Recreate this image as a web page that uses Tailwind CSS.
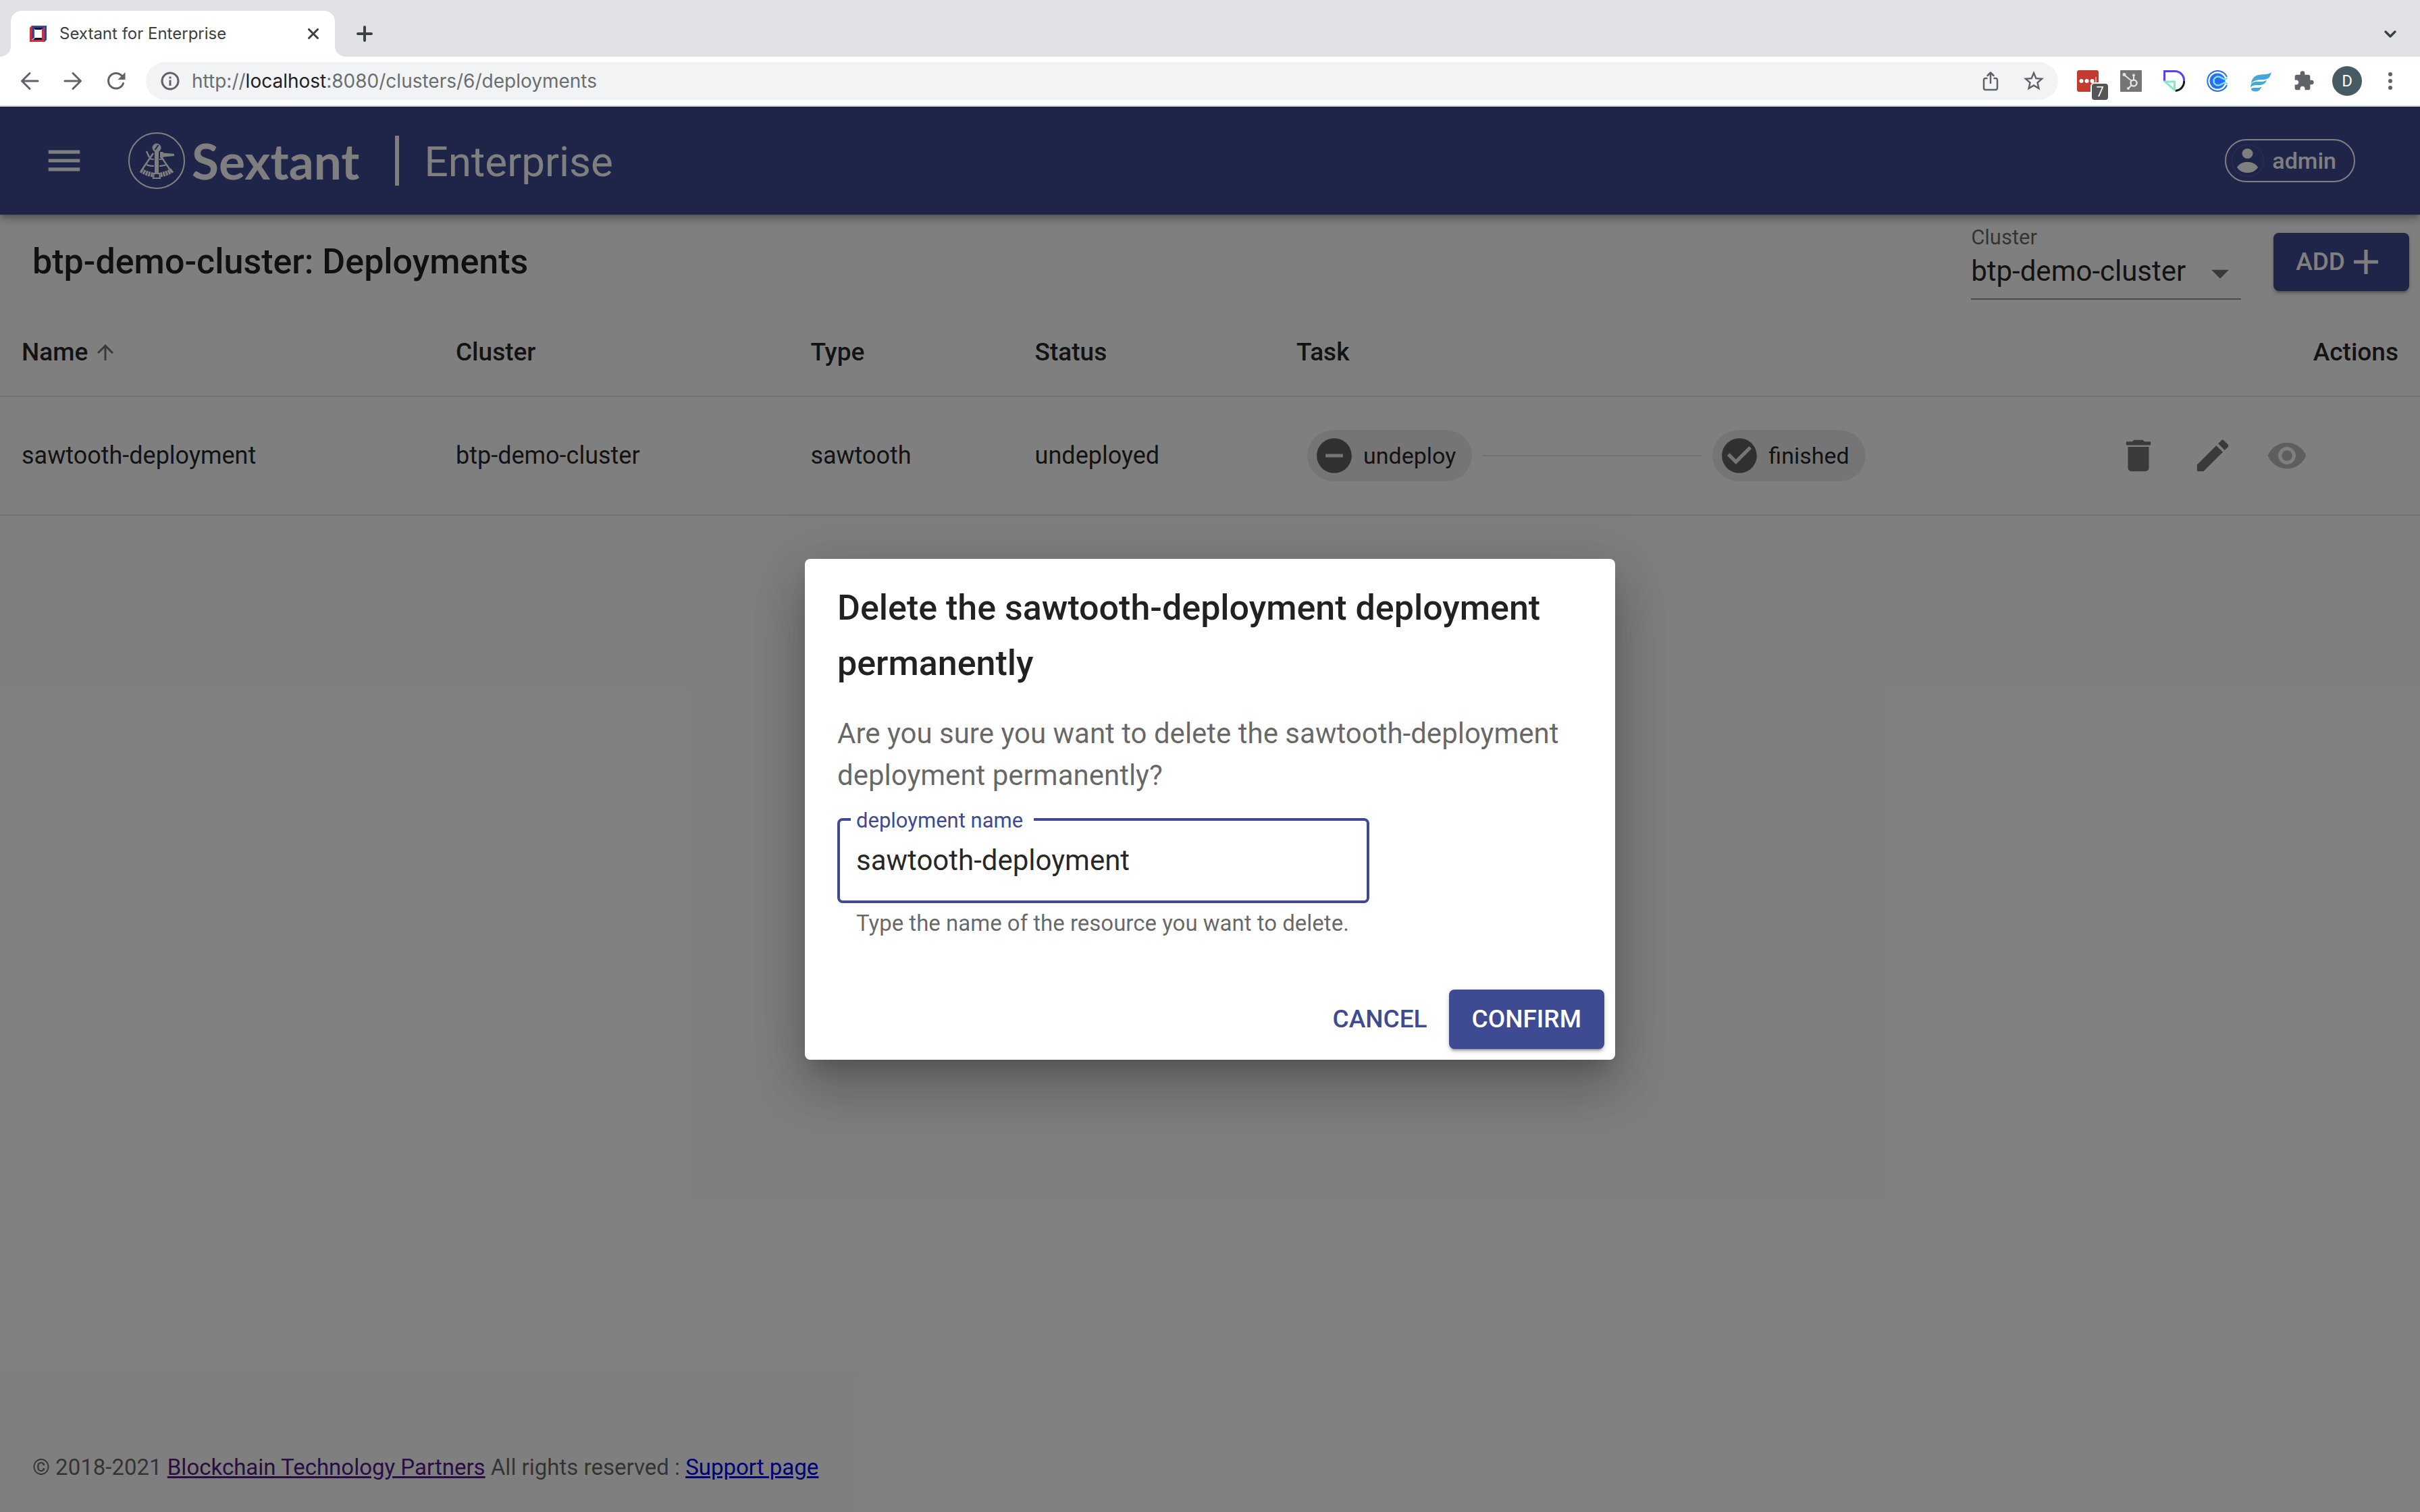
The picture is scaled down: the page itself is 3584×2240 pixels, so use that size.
<!DOCTYPE html>
<html lang="en">
<head>
<meta charset="utf-8">
<title>Sextant for Enterprise</title>
<script src="https://cdn.jsdelivr.net/npm/@tailwindcss/browser@4"></script>
</head>
<body class="flex min-h-screen flex-col bg-white font-['Roboto',sans-serif] text-black/87">

<!-- Browser window -->
<div class="font-['Inter',sans-serif]">
  <div class="flex h-[84px] items-end justify-between bg-[#dfe1e5]">
    <div class="flex items-end">
      <svg class="size-4" viewBox="0 0 16 16" aria-hidden="true"><path d="M16 0v16H0A16 16 0 0 0 16 0z" fill="#fff"/></svg>
      <div class="flex h-[68px] w-[480px] items-center rounded-t-2xl bg-white pr-6 pl-7">
        <svg class="h-[26px] w-[25px]" viewBox="0 0 25 26" aria-hidden="true">
          <path d="M3 1h22v21l-3 3V4H3z" fill="#36418f"/><path d="M0 4l3-3v21h19v3H0z" fill="#cf2f3f"/>
          <path d="M3 1h22l-4 4H7v14l-4 3z" fill="#3c4796"/><path d="M22 5v17H5l3-3h10V5z" fill="#cf2f3f"/>
          <path d="M6 4h14l-3 3H8z" fill="#10142e"/><path d="M5 22l3-3h9l2 3z" fill="#10142e"/><path d="M7 7h11v12H7z" fill="#fff"/>
        </svg>
        <span class="flex-1 pl-[19px] text-[24px] leading-8 text-[#3c4043]">Sextant for Enterprise</span>
        <button aria-label="Close tab"><svg class="block size-4" viewBox="0 0 16 16" fill="none" stroke="#3c4043" stroke-width="3" stroke-linecap="round"><path d="M1.500 1.500l13 13M14.500 1.500l-13 13"/></svg></button>
      </div>
      <svg class="size-4" viewBox="0 0 16 16" aria-hidden="true"><path d="M0 0v16h16A16 16 0 0 1 0 0z" fill="#fff"/></svg>
      <button aria-label="New tab" class="mb-[22px] ml-4"><svg class="block size-6" viewBox="0 0 24 24" fill="none" stroke="#3c4043" stroke-width="4" stroke-linecap="round"><path d="M12 2v20M2 12h20"/></svg></button>
    </div>
    <button aria-label="Search tabs" class="mr-[34px] mb-[26px]"><svg class="block h-4 w-5" viewBox="0 0 20 16" fill="none" stroke="#3c4043" stroke-width="3.500" stroke-linecap="round" stroke-linejoin="round"><path d="M3 5l7 7 7-7"/></svg></button>
  </div>
  <div class="flex h-[74px] items-center gap-3 border-b-2 border-[#dadce0] bg-white px-3 text-[#5f6368]">
    <div class="flex">
      <button aria-label="Back" class="flex w-16 justify-center"><svg class="size-8" viewBox="0 0 32 32" fill="none" stroke="currentColor" stroke-width="3" stroke-linecap="round" stroke-linejoin="round"><path d="M28 16H5M16 4.500L4.500 16 16 27.500"/></svg></button>
      <button aria-label="Forward" class="flex w-16 justify-center"><svg class="size-8" viewBox="0 0 32 32" fill="none" stroke="currentColor" stroke-width="3" stroke-linecap="round" stroke-linejoin="round"><path d="M4 16h23M16 4.500L27.500 16 16 27.500"/></svg></button>
      <button aria-label="Reload" class="flex w-16 justify-center"><svg class="size-8" viewBox="0 0 32 32" fill="none" stroke="currentColor" stroke-width="3" stroke-linecap="round"><path d="M26.500 19.500A11.300 11.300 0 1 1 24.500 8.500"/><path d="M29.500 3v11h-11z" fill="currentColor" stroke="none"/></svg></button>
    </div>
    <div class="flex h-14 flex-1 items-center rounded-full bg-[#f1f3f4] pr-1 pl-5">
      <svg class="size-8" viewBox="0 0 32 32" aria-hidden="true"><circle cx="16" cy="16" r="12" fill="none" stroke="currentColor" stroke-width="3"/><path d="M14.500 14.500h3V23h-3zM14.500 9.500h3v3h-3z" fill="currentColor"/></svg>
      <a href="http://localhost:8080/clusters/6/deployments" class="flex-1 pl-4 text-[28px] leading-9 text-[#6b6e71]">http://<span class="text-[#202124]">localhost</span>:8080/clusters/6/deployments</a>
      <button aria-label="Share" class="flex w-16 justify-center"><svg class="size-8" viewBox="0 0 32 32" fill="none" stroke="currentColor" stroke-width="2.500" stroke-linecap="round" stroke-linejoin="round"><path d="M10.500 12H8.500a2.500 2.500 0 0 0-2.500 2.500v12A2.500 2.500 0 0 0 8.500 29h15a2.500 2.500 0 0 0 2.500-2.500v-12a2.500 2.500 0 0 0-2.500-2.500h-2M16 19V4M11.500 8L16 3.500 20.500 8"/></svg></button>
      <button aria-label="Bookmark this page" class="flex w-16 justify-center"><svg class="size-9" viewBox="0 0 24 24" fill="currentColor"><path d="M22 9.240l-7.190-.62L12 2 9.190 8.630 2 9.240l5.460 4.730L5.820 21 12 17.270 18.180 21l-1.630-7.030L22 9.240zM12 15.400l-3.760 2.270 1-4.280-3.320-2.880 4.380-.38L12 6.100l1.710 4.040 4.380.38-3.320 2.880 1 4.280L12 15.400z"/></svg></button>
    </div>
    <div class="flex items-center">
      <button aria-label="Password manager" class="relative flex w-16 justify-center">
        <svg class="size-8" viewBox="0 0 32 32"><rect width="32" height="32" rx="3" fill="#c23b31"/><g fill="#fff"><circle cx="6.500" cy="16" r="3"/><circle cx="14.500" cy="16" r="3"/><circle cx="22.500" cy="16" r="3"/><path d="M27.500 10h1v12h-1z"/></g></svg>
        <span class="absolute right-0 top-[18px] flex size-[28px] items-center justify-center rounded-md border-2 border-white bg-[#555] font-['Roboto',sans-serif] text-[20px] leading-none text-white">7</span>
      </button>
      <button aria-label="HubSpot" class="flex w-16 justify-center"><svg class="size-8" viewBox="0 0 32 32"><rect width="32" height="32" rx="1" fill="#757575"/><g fill="none" stroke="#e4e4e4"><circle cx="20" cy="19" r="4.500" stroke-width="2.500"/><path d="M16.500 15.500L6 7M20 14V8M16.500 22.500L12 27" stroke-width="2"/></g><g fill="#e4e4e4"><circle cx="6" cy="6.500" r="2.500"/><circle cx="20" cy="7.500" r="2"/><circle cx="12" cy="27" r="2"/></g></svg></button>
      <button aria-label="Notes extension" class="flex w-16 justify-center"><svg class="size-8" viewBox="0 0 32 32" fill="none" stroke-width="3"><path d="M1.500 16V1.500H17A13.500 13.500 0 0 1 30.500 15.500" stroke="#5f3df5"/><path d="M30.500 15.500A13.500 13.500 0 0 1 17.500 30.500" stroke="#1b1b1b"/><path d="M2.500 17h14v12.500z" stroke="#82eacb"/></svg></button>
      <button aria-label="Calendar extension" class="flex w-16 justify-center"><svg class="size-8" viewBox="0 0 32 32" fill="none"><path d="M30 22A15 15 0 1 1 30 10" stroke="#276ef1" stroke-width="2"/><circle cx="16" cy="16" r="11.500" fill="#276ef1"/><path d="M32 12.500h-4v7h4z" fill="#fff"/><path d="M30.500 11.500c-3 3-5 2-8 0-6-4-12-1-12 4.500s6 8.500 12 4.500c3-2 5-3 8 0" stroke="#7be3f0" stroke-width="2.500"/></svg></button>
      <button aria-label="Feather extension" class="flex w-16 justify-center"><svg class="size-8" viewBox="0 0 32 32" fill="#45a6d9"><path d="M31.500 3C31 10 27 14 20 14c-8 0-15 1-18 6C3 10 9 7 17 6.500 24 6 29 6 31.500 3z"/><path d="M25 14.500C23 20 20 22 14 22c-6-.5-11 .5-13 3.500C1 19 5 17 11 17c6 .3 11 0 14-2.500z"/><path d="M17.500 24.500C15 30 12 32 7 31.500c-4-.5-6-3-4.500-4.500 3-2.500 10 .5 15-2.500z"/></svg></button>
      <button aria-label="Extensions" class="flex w-16 justify-center"><svg class="size-8" viewBox="0 0 24 24" fill="currentColor"><path d="M20.500 11H19V7c0-1.100-.9-2-2-2h-4V3.500a2.500 2.500 0 0 0-5 0V5H4c-1.100 0-1.990.9-1.990 2v3.800H3.500c1.490 0 2.700 1.210 2.700 2.700s-1.210 2.700-2.700 2.700H2V20c0 1.100.9 2 2 2h3.800v-1.500c0-1.490 1.210-2.700 2.700-2.700s2.700 1.210 2.700 2.700V22H17c1.100 0 2-.9 2-2v-4h1.500a2.500 2.500 0 0 0 0-5z"/></svg></button>
      <button aria-label="Profile" class="flex w-16 justify-center"><span class="flex size-11 items-center justify-center rounded-full bg-[#485a64] font-['Roboto',sans-serif] text-[24px] leading-none text-white">D</span></button>
      <button aria-label="Menu" class="flex w-16 justify-center"><svg class="size-8" viewBox="0 0 32 32" fill="currentColor"><circle cx="16" cy="6" r="3"/><circle cx="16" cy="16" r="3"/><circle cx="16" cy="26" r="3"/></svg></button>
    </div>
  </div>
</div>

<!-- Application -->
<div class="relative flex flex-1 flex-col overflow-hidden">
  <header class="flex h-40 items-center bg-[#3e4a92] px-16 text-white shadow-[0_4px_8px_-2px_rgba(0,0,0,0.2),0_8px_10px_0_rgba(0,0,0,0.14),0_2px_20px_0_rgba(0,0,0,0.12)]">
    <button aria-label="Open menu"><svg class="block size-[62px]" viewBox="0 0 24 24" fill="currentColor"><path d="M3 18h18v-2H3v2zm0-5h18v-2H3v2zm0-7v2h18V6H3z"/></svg></button>
    <svg class="ml-16 size-[84px]" viewBox="0 0 84 84" fill="none" stroke="#fff" aria-hidden="true">
      <circle cx="42" cy="42" r="41" stroke-width="2"/>
      <path d="M27 28l4 9M37 31L18.500 58M48 35l16 24" stroke-width="2.500"/>
      <path d="M32 39c2 1 4 1 6 1M46 40c2 0 4 0 6-1M27 48c4 2 7 2 11 2M46 50c4 0 7-1 11-2" stroke-width="2"/>
      <path d="M19 56c5 4 11 6 18 7M65 56c-5 4-11 6-18 7" stroke-width="7" stroke-dasharray="3 1"/>
      <path d="M39 26h6v38h-6z" fill="#fff" stroke="none"/><circle cx="42" cy="23" r="6.500" fill="#fff" stroke="none"/>
      <path d="M39.500 26l5-7" stroke="#3e4a92" stroke-width="2"/>
      <path d="M47 29h4l1 1.500 16 1.500v3l-16 1.500-1 1.500h-4z" fill="#fff" stroke="none"/>
      <path d="M38 61h8l1 7H37z" stroke-width="2" fill="#3e4a92"/>
    </svg>
    <span class="pl-[10px] font-['Lato',sans-serif] text-[73px] leading-[88px] font-bold">Sextant</span>
    <span class="ml-[52px] h-[74px] w-[6px] bg-white"></span>
    <span class="ml-[38px] pt-[3px] text-[62px] leading-[72px]">Enterprise</span>
    <button class="mr-8 ml-auto flex h-16 items-center rounded-full border-2 border-white pr-[26px] pl-2 text-[34px] leading-10 font-medium">
      <svg class="mr-3 size-12" viewBox="0 0 48 48" aria-hidden="true"><circle cx="24" cy="24" r="23.500" fill="none" stroke="#5e68a4"/><ellipse cx="23.500" cy="13.500" rx="8" ry="7.500" fill="#fff"/><path d="M8 34c3-5.500 9-8 15.500-8S36 28.500 39 34c-3 5-9 8-15.500 8S11 39 8 34z" fill="#fff"/></svg>
      admin
    </button>
  </header>

  <main>
    <div class="flex h-[140px] items-center pr-4 pl-12">
      <h1 class="flex-1 text-[52px] leading-[82px] font-medium">btp-demo-cluster: Deployments</h1>
      <div class="relative mr-12 flex w-[400px] flex-col gap-1">
        <label for="cluster" class="text-[31px] leading-10 text-black/60">Cluster</label>
        <select id="cluster" class="h-[68px] w-full appearance-none border-b-2 border-black/42 pb-[14px] text-[42px] leading-[48px]"><option>btp-demo-cluster</option></select>
        <svg class="pointer-events-none absolute right-0 bottom-2 size-[62px] text-black/54" viewBox="0 0 24 24" fill="currentColor" aria-hidden="true"><path d="M7 10l5 5 5-5z"/></svg>
      </div>
      <button class="flex h-[86px] items-center rounded-lg bg-[#3e4a92] px-[33px] text-[37px] leading-[62px] font-medium text-white shadow-[0_6px_2px_-4px_rgba(0,0,0,0.2),0_4px_4px_0_rgba(0,0,0,0.14),0_2px_10px_0_rgba(0,0,0,0.12)]">ADD<svg class="size-[62px]" viewBox="0 0 24 24" fill="currentColor" aria-hidden="true"><path d="M19 13h-6v6h-2v-6H5v-2h6V5h2v6h6v2z"/></svg></button>
    </div>

    <table class="w-full table-fixed border-collapse text-left">
      <thead>
        <tr class="h-[129px] border-b-2 border-[#e0e0e0] text-[37px] leading-[54px]">
          <th class="w-[17.94%] px-8 font-medium"><span class="flex items-center gap-2">Name<svg class="size-9 text-black/54" viewBox="0 0 24 24" fill="currentColor" aria-label="sorted ascending"><path d="M4 12l1.410 1.410L11 7.830V20h2V7.830l5.580 5.590L20 12l-8-8-8 8z"/></svg></span></th>
          <th class="w-[14.66%] px-8 font-medium">Cluster</th>
          <th class="w-[9.27%] px-8 font-medium">Type</th>
          <th class="w-[10.81%] px-8 font-medium">Status</th>
          <th class="px-8 font-medium">Task</th>
          <th class="w-[20%] px-8 text-right font-medium">Actions</th>
        </tr>
      </thead>
      <tbody>
        <tr class="h-[176px] border-b-2 border-[#e0e0e0] text-[36px] leading-[54px]">
          <td class="px-8">sawtooth-deployment</td>
          <td class="px-8">btp-demo-cluster</td>
          <td class="px-8">sawtooth</td>
          <td class="px-8">undeployed</td>
          <td class="px-8">
            <div class="flex items-center gap-4 pl-4 text-[34px]">
              <span class="flex h-[76px] items-center gap-3 rounded-full bg-black/8 pr-6 pl-[9px]"><svg class="size-[62px] text-[#616161]" viewBox="0 0 24 24" fill="currentColor" aria-hidden="true"><path d="M12 2C6.480 2 2 6.480 2 12s4.480 10 10 10 10-4.480 10-10S17.520 2 12 2zm5 11H7v-2h10v2z"/></svg>undeploy</span>
              <span class="h-[2px] w-[324px] bg-[#e0e0e0]"></span>
              <span class="flex h-[76px] items-center gap-3 rounded-full bg-black/8 pr-6 pl-[9px]"><svg class="size-[62px] text-[#616161]" viewBox="0 0 24 24" fill="currentColor" aria-hidden="true"><path d="M12 2C6.480 2 2 6.480 2 12s4.480 10 10 10 10-4.480 10-10S17.520 2 12 2zm-2 15l-5-5 1.410-1.410L10 14.170l7.590-7.590L19 8l-9 9z"/></svg>finished</span>
            </div>
          </td>
          <td class="px-8">
            <div class="mr-[110px] flex justify-end text-black/54">
              <button aria-label="Delete" class="p-6"><svg class="block size-[62px]" viewBox="0 0 24 24" fill="currentColor"><path d="M6 19c0 1.100.9 2 2 2h8c1.100 0 2-.9 2-2V7H6v12zM19 4h-3.500l-1-1h-5l-1 1H5v2h14V4z"/></svg></button>
              <button aria-label="Edit" class="p-6"><svg class="block size-[62px]" viewBox="0 0 24 24" fill="currentColor"><path d="M3 17.250V21h3.750L17.810 9.940l-3.750-3.750L3 17.250zM20.710 7.040c.39-.39.39-1.020 0-1.410l-2.340-2.340a.9959.9959 0 0 0-1.410 0l-1.830 1.830 3.750 3.750 1.830-1.830z"/></svg></button>
              <button aria-label="View" disabled class="p-6 text-black/26"><svg class="block size-[62px]" viewBox="0 0 24 24" fill="currentColor"><path d="M12 4.500C7 4.500 2.730 7.610 1 12c1.730 4.390 6 7.500 11 7.500s9.270-3.110 11-7.500c-1.730-4.390-6-7.500-11-7.500zM12 17c-2.760 0-5-2.240-5-5s2.240-5 5-5 5 2.240 5 5-2.240 5-5 5zm0-8c-1.660 0-3 1.340-3 3s1.340 3 3 3 3-1.340 3-3-1.340-3-3-3z"/></svg></button>
            </div>
          </td>
        </tr>
      </tbody>
    </table>
  </main>

  <footer class="mt-auto px-12 py-11 text-[33px] leading-[44px] text-black/60">© 2018-2021 <a href="#partners" class="text-[#551a8b] underline">Blockchain Technology Partners</a> All rights reserved : <a href="#support" class="text-[#0000ee] underline">Support page</a></footer>

  <!-- Modal -->
  <div class="absolute inset-0 flex items-center justify-center bg-black/50">
    <div role="dialog" aria-modal="true" aria-labelledby="dialog-title" class="w-[1200px] rounded-lg bg-white shadow-[0_22px_30px_-14px_rgba(0,0,0,0.2),0_48px_76px_6px_rgba(0,0,0,0.14),0_18px_92px_16px_rgba(0,0,0,0.12)]">
      <h2 id="dialog-title" class="px-12 pt-8 text-[52px] leading-[82px] font-medium">Delete the sawtooth-deployment deployment permanently</h2>
      <div class="px-12 pt-8">
        <p class="text-[42px] leading-[62px] text-black/60">Are you sure you want to delete the sawtooth-deployment deployment permanently?</p>
        <div class="relative mt-8 w-[788px]">
          <input id="deployment-name" type="text" value="sawtooth-deployment" class="block h-[126px] w-full rounded-lg border-4 border-[#3e4a92] px-6 pb-[2px] text-[42px] outline-none">
          <label for="deployment-name" class="absolute -top-[14px] left-5 bg-white pr-4 pl-2 text-[31px] leading-9 text-[#3e4a92]">deployment name</label>
        </div>
        <p class="mt-[10px] px-7 text-[33px] leading-10 text-black/60">Type the name of the resource you want to delete.</p>
      </div>
      <div class="flex justify-end gap-4 px-4 pt-[78px] pb-4 text-[37px] leading-[62px] font-medium">
        <button class="h-[88px] px-4 text-[#3e4a92]">CANCEL</button>
        <button class="h-[88px] rounded-lg bg-[#3e4a92] px-[34px] text-white shadow-[0_6px_2px_-4px_rgba(0,0,0,0.2),0_4px_4px_0_rgba(0,0,0,0.14),0_2px_10px_0_rgba(0,0,0,0.12)]">CONFIRM</button>
      </div>
    </div>
  </div>
</div>
</body>
</html>
